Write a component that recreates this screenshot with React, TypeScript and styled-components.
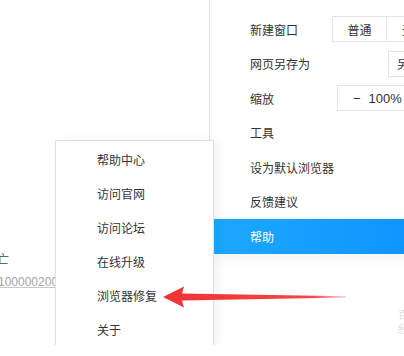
import React from "react";
import styled, { createGlobalStyle } from "styled-components";

const Global = createGlobalStyle`
  html, body {
    margin: 0;
    padding: 0;
    background: #ffffff;
    width: 404px;
    height: 356px;
    overflow: hidden;
  }
  body {
    font-family: "Noto Sans CJK SC", "Noto Sans", sans-serif;
    font-size: 12px;
    color: #333333;
  }
`;

const Page = styled.div`
  position: relative;
  display: flex;
  width: 404px;
  height: 345px;
  overflow: hidden;
  background: #ffffff;
`;

const Content = styled.div`
  width: 209px;
  flex-shrink: 0;
  display: flex;
  flex-direction: column;
  gap: 7px;
  padding-top: 251px;
  box-sizing: border-box;
`;

const CutText = styled.span`
  display: block;
  line-height: 16px;
  font-size: 12px;
  margin-left: -3px;
  color: #666666;
`;

const LinkNumber = styled.span`
  display: block;
  line-height: 16px;
  margin-left: -2px;
  font-family: "Liberation Sans", Arial, sans-serif;
  font-size: 12px;
  color: #a3a3a3;
  text-decoration: underline;
  text-decoration-color: #c8c8c8;
  white-space: nowrap;
`;

const MainMenu = styled.div`
  width: 255px;
  flex-shrink: 0;
  border-left: 1px solid #e2e2e2;
  padding-top: 12px;
  box-sizing: border-box;
  display: flex;
  flex-direction: column;
  background: #ffffff;
`;

const MenuRow = styled.div<{ $active?: boolean }>`
  height: 34.5px;
  display: flex;
  align-items: center;
  padding: 0 22px 0 40px;
  box-sizing: border-box;
  color: ${(p) => (p.$active ? "#ffffff" : "#333333")};
  background: ${(p) =>
    p.$active ? "linear-gradient(90deg, #1ca8ff 0%, #0891fd 100%)" : "transparent"};
  box-shadow: ${(p) => (p.$active ? "0 6px 12px rgba(0,0,0,0.04)" : "none")};
`;

const Label = styled.span`
  flex: 1;
  white-space: nowrap;
`;

const BtnGroup = styled.div`
  display: flex;
`;

const Btn = styled.div<{ $w: number; $joined?: boolean }>`
  width: ${(p) => p.$w}px;
  height: 26px;
  box-sizing: border-box;
  border: 1px solid #e4e4e4;
  border-left-width: ${(p) => (p.$joined ? 0 : 1)}px;
  display: flex;
  align-items: center;
  justify-content: center;
  white-space: nowrap;
  color: #333333;
  background: #ffffff;
`;

const ZoomCtrl = styled.div`
  width: 105px;
  height: 26px;
  box-sizing: border-box;
  border: 1px solid #e4e4e4;
  display: flex;
  align-items: center;
  padding-left: 15px;
  gap: 8px;
  font-family: "Liberation Sans", Arial, sans-serif;
  font-size: 13px;
  color: #333333;
  white-space: nowrap;
`;

const SubMenu = styled.div`
  position: absolute;
  left: 55px;
  top: 140px;
  width: 159px;
  height: 206px;
  box-sizing: border-box;
  border: 1px solid #e0e0e0;
  border-bottom: none;
  background: #ffffff;
  padding-top: 2px;
  display: flex;
  flex-direction: column;
  box-shadow: 4px 0 10px rgba(0, 0, 0, 0.05);
`;

const SubItem = styled.div`
  height: 34.3px;
  display: flex;
  align-items: center;
  padding-left: 41px;
  color: #333333;
  white-space: nowrap;
`;

const Arrow = styled.svg`
  position: absolute;
  left: 0;
  top: 0;
  pointer-events: none;
`;

const Watermark = styled.div`
  position: absolute;
  left: 398px;
  top: 308px;
  display: flex;
  flex-direction: column;
  gap: 2px;
  font-size: 11px;
  line-height: 12px;
  color: #dedede;
  white-space: nowrap;
`;

const subItems = ["帮助中心", "访问官网", "访问论坛", "在线升级", "浏览器修复", "关于"];

export default function App() {
  return (
    <>
      <Global />
      <Page>
        <Content>
          <CutText>亡</CutText>
          <LinkNumber>1000002000</LinkNumber>
        </Content>
        <MainMenu>
          <MenuRow>
            <Label>新建窗口</Label>
            <BtnGroup>
              <Btn $w={55}>普通</Btn>
              <Btn $w={55} $joined>
                无痕
              </Btn>
            </BtnGroup>
          </MenuRow>
          <MenuRow>
            <Label>网页另存为</Label>
            <Btn $w={54}>另存为</Btn>
          </MenuRow>
          <MenuRow>
            <Label>缩放</Label>
            <ZoomCtrl>
              <span>−</span>
              <span>100%</span>
              <span>+</span>
            </ZoomCtrl>
          </MenuRow>
          <MenuRow>
            <Label>工具</Label>
          </MenuRow>
          <MenuRow>
            <Label>设为默认浏览器</Label>
          </MenuRow>
          <MenuRow>
            <Label>反馈建议</Label>
          </MenuRow>
          <MenuRow $active>
            <Label>帮助</Label>
          </MenuRow>
        </MainMenu>
        <SubMenu>
          {subItems.map((t) => (
            <SubItem key={t}>{t}</SubItem>
          ))}
        </SubMenu>
        <Arrow width="404" height="345" viewBox="0 0 404 345">
          <defs>
            <linearGradient id="tail" x1="163" y1="0" x2="348" y2="0" gradientUnits="userSpaceOnUse">
              <stop offset="0" stopColor="#f03434" />
              <stop offset="0.8" stopColor="#f24545" />
              <stop offset="1" stopColor="#f45a5a" stopOpacity="0.3" />
            </linearGradient>
          </defs>
          <path
            d="M163 297 L184 286.5 L182 293.6 L346 296.2 L346 297.4 L182 300.6 L184 307.5 Z"
            fill="url(#tail)"
          />
        </Arrow>
        <Watermark>
          <span>百</span>
          <span>经</span>
        </Watermark>
      </Page>
    </>
  );
}
